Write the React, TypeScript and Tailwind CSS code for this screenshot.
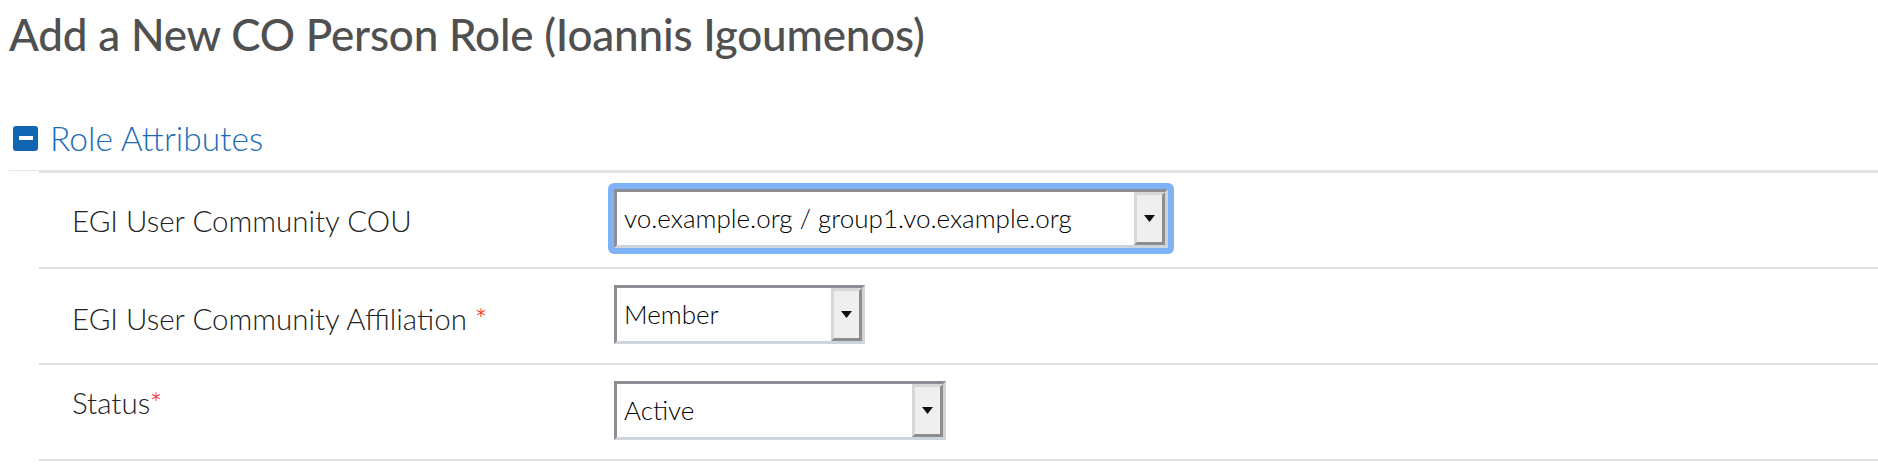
const FONT = "font-['Lato','Liberation_Sans',sans-serif]";

function Caret() {
  return (
    <svg width="11" height="7" viewBox="0 0 11 7">
      <path d="M0 0 L11 0 L5.5 7 Z" fill="#111" />
    </svg>
  );
}

function FakeSelect({ value, width }: { value: string; width: string }) {
  return (
    <div
      className={`flex h-[59px] ${width} border-[3px] border-t-[#8b8e92] border-l-[#8b8e92] border-b-[#cfd4d9] border-r-[#cfd4d9] bg-white`}
    >
      <span className="flex-1 flex items-center pl-[7px] text-[26px] font-light text-black whitespace-nowrap overflow-hidden">
        {value}
      </span>
      <div className="w-[31px] flex items-center justify-center bg-[#efefef] border-[3px] border-t-[#d7d7d7] border-l-[#d7d7d7] border-b-[#8d8d8d] border-r-[#8d8d8d]">
        <Caret />
      </div>
    </div>
  );
}

const ROWS = [
  { label: 'EGI User Community COU', req: '', value: 'vo.example.org / group1.vo.example.org', width: 'w-[554px]', focus: true, pad: 'pt-[30px]' },
  { label: 'EGI User Community Affiliation', req: ' *', value: 'Member', width: 'w-[251px]', focus: false, pad: 'pt-[32px]' },
  { label: 'Status', req: '*', value: 'Active', width: 'w-[332px]', focus: false, pad: 'pt-[20px]' },
];

export default function App() {
  return (
    <main className={`min-h-screen bg-white pl-[9px] ${FONT}`}>
      {/* Page title */}
      <h1 className="pt-[12px] text-[44px] leading-none font-medium text-[#505050] tracking-[-0.2px]">
        Add a New CO Person Role (Ioannis Igoumenos)
      </h1>

      {/* Section header */}
      <div className="mt-[64px] flex items-center gap-[12px] pl-[4px] pb-[14px] border-b border-[#e6e7e8]">
        <span className="w-[25px] h-[25px] rounded-[3px] bg-[#1066b3] flex items-center justify-center">
          <span className="w-[14px] h-[4px] bg-white" />
        </span>
        <span className="text-[33.5px] leading-[36px] font-light text-[#1a6db5]">Role Attributes</span>
      </div>

      {/* Attribute table */}
      <div className="ml-[30px] border-t-2 border-[#dde1e5]">
        {ROWS.map(r => (
          <div key={r.label} className="flex h-[96px] border-b-2 border-[#dde1e5]">
            <div className={`w-[575px] pl-[33px] ${r.pad}`}>
              <span className="text-[29.5px] leading-[36px] font-light text-[#222]">
                {r.label}
                {r.req && <span className="text-[#ff0000]">{r.req}</span>}
              </span>
            </div>
            <div className={r.focus ? 'pt-[10px]' : 'pt-[16px]'}>
              {r.focus ? (
                <div className="-ml-[6px] p-[6px] rounded-[6px] bg-[#7fb1f6]">
                  <FakeSelect value={r.value} width={r.width} />
                </div>
              ) : (
                <FakeSelect value={r.value} width={r.width} />
              )}
            </div>
          </div>
        ))}
      </div>
    </main>
  );
}
